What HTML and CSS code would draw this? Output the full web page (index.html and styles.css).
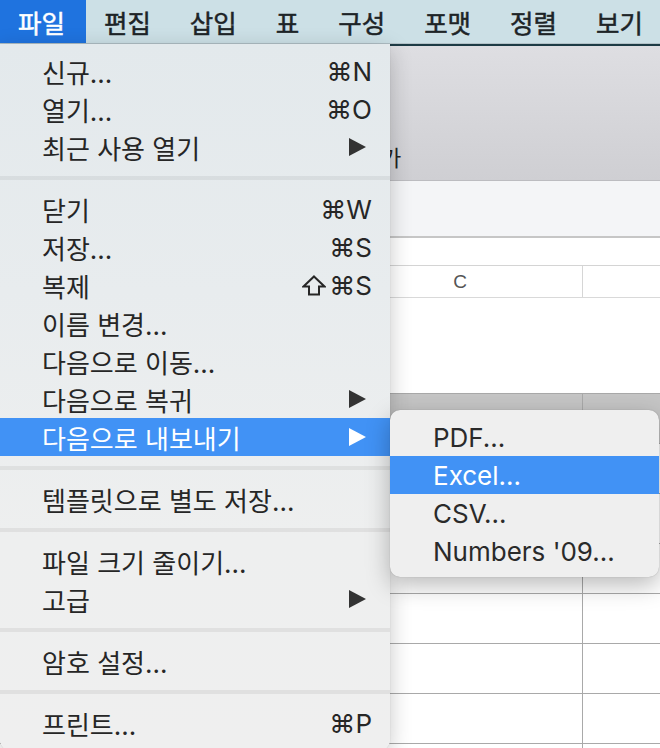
FILE: index.html
```html
<!DOCTYPE html>
<html lang="ko">
<head>
<meta charset="utf-8">
<title>Numbers 파일 메뉴</title>
<link rel="stylesheet" href="styles.css">
</head>
<body>
<div class="screen">
  <div class="menubar">
    <span class="mb-item active">파일</span>
    <span class="mb-item">편집</span>
    <span class="mb-item">삽입</span>
    <span class="mb-item">표</span>
    <span class="mb-item">구성</span>
    <span class="mb-item">포맷</span>
    <span class="mb-item">정렬</span>
    <span class="mb-item">보기</span>
  </div>

  <div class="window">
    <div class="toolbar"><span class="tb-label">가</span></div>
    <div class="formatbar"></div>
    <div class="sheet-top"></div>
    <div class="col-header">
      <div class="col col-b"></div>
      <div class="col col-c">C</div>
      <div class="col col-d"></div>
    </div>
    <div class="blank"></div>
    <div class="rows">
      <div class="row row-shaded"><div class="cell cell-c"></div><div class="cell"></div></div>
      <div class="row"><div class="cell cell-c"></div><div class="cell"></div></div>
      <div class="row"><div class="cell cell-c"></div><div class="cell"></div></div>
      <div class="row"><div class="cell cell-c"></div><div class="cell"></div></div>
      <div class="row"><div class="cell cell-c"></div><div class="cell"></div></div>
      <div class="row"><div class="cell cell-c"></div><div class="cell"></div></div>
      <div class="row"><div class="cell cell-c"></div><div class="cell"></div></div>
      <div class="row"><div class="cell cell-c"></div><div class="cell"></div></div>
    </div>
  </div>

  <div class="menu">
    <div class="item"><span class="label">신규...</span><span class="key">⌘N</span></div>
    <div class="item"><span class="label">열기...</span><span class="key">⌘O</span></div>
    <div class="item"><span class="label">최근 사용 열기</span><svg class="arrow" viewBox="0 0 17 18"><polygon points="0,0 17,9 0,18"/></svg></div>
    <div class="sep"></div>
    <div class="item"><span class="label">닫기</span><span class="key">⌘W</span></div>
    <div class="item"><span class="label">저장...</span><span class="key">⌘S</span></div>
    <div class="item"><span class="label">복제</span><svg class="shift" viewBox="0 0 24 21"><polygon points="12,1.5 22.5,11.5 17,11.5 17,19.5 7,19.5 7,11.5 1.5,11.5"/></svg><span class="key">⌘S</span></div>
    <div class="item"><span class="label">이름 변경...</span></div>
    <div class="item"><span class="label">다음으로 이동...</span></div>
    <div class="item"><span class="label">다음으로 복귀</span><svg class="arrow" viewBox="0 0 17 18"><polygon points="0,0 17,9 0,18"/></svg></div>
    <div class="item selected"><span class="label">다음으로 내보내기</span><svg class="arrow" viewBox="0 0 17 18"><polygon points="0,0 17,9 0,18"/></svg></div>
    <div class="sep"></div>
    <div class="item"><span class="label">템플릿으로 별도 저장...</span></div>
    <div class="sep"></div>
    <div class="item"><span class="label">파일 크기 줄이기...</span></div>
    <div class="item"><span class="label">고급</span><svg class="arrow" viewBox="0 0 17 18"><polygon points="0,0 17,9 0,18"/></svg></div>
    <div class="sep"></div>
    <div class="item"><span class="label">암호 설정...</span></div>
    <div class="sep"></div>
    <div class="item"><span class="label">프린트...</span><span class="key">⌘P</span></div>
  </div>

  <div class="submenu">
    <div class="sub-item">PDF...</div>
    <div class="sub-item selected">Excel...</div>
    <div class="sub-item">CSV...</div>
    <div class="sub-item">Numbers '09...</div>
  </div>
</div>
</body>
</html>
```

FILE: styles.css
```css
html, body {
  margin: 0;
  padding: 0;
}

body {
  font-family: "Inter", "Noto Sans CJK KR", "DejaVu Sans", sans-serif;
  color: #262626;
}

.screen {
  position: relative;
  width: 660px;
  height: 748px;
  overflow: hidden;
  background: #ffffff;
}

/* ---------- menu bar ---------- */
.menubar {
  display: flex;
  height: 43px;
  border-bottom: 1px solid #b3c2c8;
  background: #cce0e6;
  font-family: "Noto Sans CJK KR", sans-serif;
  font-size: 25.5px;
  font-weight: 400;
  -webkit-text-stroke: 0.5px currentColor;
  color: #1d2427;
  white-space: nowrap;
  overflow: hidden;
}

.mb-item {
  flex-shrink: 0;
  display: flex;
  align-items: center;
  padding: 0 21px 0 18px;
  line-height: 43px;
}

.mb-item.active {
  background: #1f73df;
  color: #ffffff;
}

/* ---------- background window ---------- */
.window {
  display: flex;
  flex-direction: column;
}

.toolbar {
  height: 134px;
  border-top: 2px solid #1d3b45;
  border-bottom: 1px solid #bcbcc0;
  background: linear-gradient(#dedee2, #cfcfd3);
  display: flex;
  align-items: flex-end;
  padding-left: 381px;
}

.tb-label {
  font-family: "Noto Sans CJK KR", sans-serif;
  font-size: 22px;
  line-height: 22px;
  margin-bottom: 13px;
  color: #222;
}

.formatbar {
  height: 55px;
  background: #f4f5f7;
  border-bottom: 2px solid #c6c6c6;
}

.sheet-top {
  height: 27px;
  background: #ffffff;
  border-bottom: 1px solid #d4d4d4;
}

.col-header {
  display: flex;
  height: 31px;
  border-bottom: 1px solid #d9d9d9;
  background: #ffffff;
}

.col {
  box-sizing: border-box;
}

.col-b {
  width: 338px;
}

.col-c {
  width: 245px;
  border-right: 1px solid #d6d6d6;
  display: flex;
  align-items: center;
  justify-content: center;
  font-family: "Liberation Sans", sans-serif;
  font-size: 19px;
  color: #555555;
}

.col-d {
  flex: 1;
}

.blank {
  height: 95px;
  background: #ffffff;
  border-bottom: 1px solid #a9a9a9;
}

.rows {
  display: flex;
  flex-direction: column;
}

.row {
  display: flex;
  height: 49px;
  border-bottom: 1px solid #a9a9a9;
}

.row-shaded {
  background: #c5c5c5;
}

.cell {
  flex: 1;
}

.cell-c {
  flex: 0 0 582px;
  border-right: 1px solid #a9a9a9;
}

/* ---------- dropdown menu ---------- */
.menu {
  position: absolute;
  top: 44px;
  left: 0;
  width: 390px;
  height: 706px;
  box-sizing: border-box;
  padding: 8px 0;
  background: linear-gradient(#e3e9ec 0%, #e8ecee 35%, #eeefef 70%, #efefef 100%);
  border-radius: 0 0 10px 10px;
  box-shadow: 0 6px 22px rgba(0, 0, 0, 0.22), 0 0 1px rgba(0, 0, 0, 0.25);
  font-size: 26px;
  z-index: 2;
}

.item {
  display: flex;
  align-items: center;
  height: 38px;
  padding: 0 18px 0 42px;
  white-space: nowrap;
}

.item .label {
  flex: 1;
}

.key {
  font-family: "Inter", "DejaVu Sans", sans-serif;
  font-size: 26px;
  color: #262626;
}

.shift {
  width: 24px;
  height: 21px;
  margin-right: 3px;
  margin-top: 1px;
  fill: none;
  stroke: #262626;
  stroke-width: 2;
  stroke-linejoin: miter;
}

.arrow {
  width: 17px;
  height: 18px;
  margin-right: 6px;
  fill: #333333;
}

.item.selected {
  background: #4192f5;
  color: #ffffff;
}

.item.selected .arrow {
  fill: #ffffff;
}

.sep {
  height: 4px;
  margin: 10px 0;
  background: rgba(0, 0, 0, 0.06);
}

/* ---------- submenu ---------- */
.submenu {
  position: absolute;
  top: 410px;
  left: 390px;
  width: 269px;
  box-sizing: border-box;
  padding: 8px 0 7px;
  background: #efefef;
  border-radius: 10px;
  box-shadow: 0 8px 24px rgba(0, 0, 0, 0.28), 0 0 1px rgba(0, 0, 0, 0.3);
  z-index: 3;
}

.sub-item {
  display: flex;
  align-items: center;
  height: 38px;
  padding-left: 43px;
  font-family: "Inter", sans-serif;
  font-size: 26px;
  color: #2a2a2a;
  white-space: nowrap;
}

.sub-item.selected {
  background: #4192f5;
  color: #ffffff;
}
```
